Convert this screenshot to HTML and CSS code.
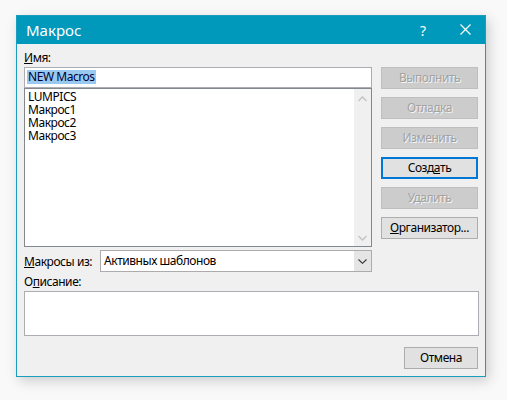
FILE: index.html
```html
<!DOCTYPE html>
<html lang="ru">
<head>
<meta charset="utf-8">
<title>Макрос</title>
<link rel="stylesheet" href="styles.css">
</head>
<body>
<div class="dialog">
  <div class="titlebar">
    <span class="title">Макрос</span>
    <span class="help">?</span>
    <span class="close">
      <svg width="11" height="11" viewBox="0 0 11 11"><path d="M0.5 0.5 L10.5 10.5 M10.5 0.5 L0.5 10.5" stroke="#fff" stroke-width="1.2" fill="none"/></svg>
    </span>
  </div>
  <div class="content">
    <div class="top">
      <div class="left">
        <div class="lbl"><u>И</u>мя:</div>
        <div class="input"><span class="sel">NEW Macros</span></div>
        <div class="list">
          <div class="items">
            <div>LUMPICS</div>
            <div>Макрос1</div>
            <div>Макрос2</div>
            <div>Макрос3</div>
          </div>
          <div class="scroll">
            <svg width="9" height="6" viewBox="0 0 9 6"><path d="M0.5 5 L4.5 1 L8.5 5" stroke="#c2c2c2" stroke-width="1.3" fill="none"/></svg>
            <svg width="9" height="6" viewBox="0 0 9 6"><path d="M0.5 1 L4.5 5 L8.5 1" stroke="#c2c2c2" stroke-width="1.3" fill="none"/></svg>
          </div>
        </div>
        <div class="from">
          <div class="lbl from-lbl"><u>М</u>акросы из:</div>
          <div class="combo">
            <span class="combo-val">Активных шаблонов</span>
            <span class="drop">
              <svg width="9" height="5" viewBox="0 0 9 5"><path d="M0.5 0.5 L4.5 4.3 L8.5 0.5" stroke="#333" stroke-width="1.1" fill="none"/></svg>
            </span>
          </div>
        </div>
      </div>
      <div class="buttons">
        <div class="btn disabled">Выполнить</div>
        <div class="btn disabled">Отладка</div>
        <div class="btn disabled">Изменить</div>
        <div class="btn default">Созд<u>а</u>ть</div>
        <div class="btn disabled">Удалить</div>
        <div class="btn"><u>О</u>рганизатор...</div>
      </div>
    </div>
    <div class="lbl desc-lbl">О<u>п</u>исание:</div>
    <div class="desc"></div>
    <div class="footer">
      <div class="btn cancel">Отмена</div>
    </div>
  </div>
</div>
</body>
</html>
```

FILE: styles.css
```css
html, body {
  margin: 0;
  padding: 0;
}
body {
  background: #f9f9f9;
  font-family: "Noto Sans", "Segoe UI", sans-serif;
  font-size: 12px;
  color: #000;
  padding: 15px 0 0 16px;
  height: 400px;
  box-sizing: border-box;
}
.dialog {
  width: 470px;
  height: 362px;
  box-sizing: border-box;
  border: 1px solid #1a9ebf;
  background: #f0f0f0;
  box-shadow: 3px 4px 12px rgba(0, 0, 0, 0.18);
  display: flex;
  flex-direction: column;
}
.titlebar {
  height: 28px;
  background: #0099bc;
  color: #fff;
  display: flex;
  align-items: center;
  flex: none;
}
.title {
  font-size: 15px;
  margin-left: 9px;
  flex: 1;
  padding-bottom: 1px;
}
.help {
  font-size: 14px;
  width: 14px;
  margin-right: 30px;
  text-align: center;
}
.close {
  display: flex;
  margin-right: 14px;
  margin-bottom: 1px;
}
.content {
  padding: 6px 6px 0 7px;
  display: flex;
  flex-direction: column;
  letter-spacing: -0.45px;
}
.top {
  display: flex;
  gap: 9px;
}
.left {
  width: 348px;
  display: flex;
  flex-direction: column;
}
.lbl {
  line-height: 15px;
  height: 15px;
}
.lbl u {
  text-decoration-thickness: 1px;
  text-underline-offset: 1px;
}
.left > .lbl {
  margin-bottom: 2px;
}
.input {
  height: 21px;
  box-sizing: border-box;
  border: 1px solid #abadb3;
  background: #fff;
  padding: 2px 0 0 2px;
  display: flex;
}
.sel {
  background: #99c9ef;
  color: #000033;
  line-height: 14px;
  height: 14px;
  padding: 0 1px;
}
.list {
  height: 159px;
  box-sizing: border-box;
  border: 1px solid #828790;
  background: #fff;
  display: flex;
}
.items {
  flex: 1;
  padding: 1px 0 0 3px;
  line-height: 13px;
}
.scroll {
  width: 17px;
  background: #f0f0f0;
  display: flex;
  flex-direction: column;
  justify-content: space-between;
  align-items: center;
  padding: 7px 0 5px;
  box-sizing: border-box;
}
.from {
  display: flex;
  align-items: center;
  margin-top: 3px;
}
.from-lbl {
  width: 76px;
}
.combo {
  flex: 1;
  height: 22px;
  box-sizing: border-box;
  border: 1px solid #acacac;
  background: #fff;
  display: flex;
}
.combo-val {
  flex: 1;
  padding-left: 3px;
  line-height: 19px;
}
.drop {
  width: 17px;
  background: #e5e5e5;
  display: flex;
  align-items: center;
  justify-content: center;
}
.buttons {
  margin-top: 17px;
  display: flex;
  flex-direction: column;
  gap: 8px;
}
.btn {
  width: 97px;
  height: 22px;
  box-sizing: border-box;
  border: 1px solid #adadad;
  background: #e1e1e1;
  display: flex;
  align-items: center;
  justify-content: center;
  padding-bottom: 1px;
}
.btn u {
  text-decoration-thickness: 1px;
  text-underline-offset: 1px;
}
.btn.disabled {
  background: #cccccc;
  border-color: #bfbfbf;
  color: #a2a2a2;
  text-shadow: 1px 1px 0 #f4f4f4;
}
.btn.default {
  border: 2px solid #0078d7;
}
.desc-lbl {
  margin-top: 2px;
  margin-bottom: 2px;
}
.desc {
  width: 455px;
  height: 45px;
  box-sizing: border-box;
  border: 1px solid #abadb3;
  background: #fff;
}
.footer {
  display: flex;
  justify-content: flex-end;
  margin-top: 11px;
  padding-right: 1px;
}
.btn.cancel {
  width: 74px;
}
```
